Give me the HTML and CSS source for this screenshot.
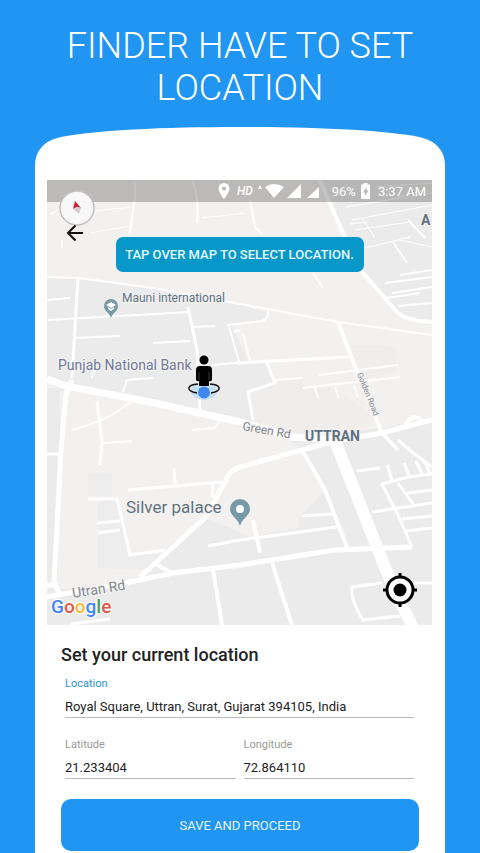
FILE: index.html
```html
<!DOCTYPE html>
<html lang="en">
<head>
<meta charset="utf-8">
<meta name="viewport" content="width=device-width, initial-scale=1">
<title>Set location</title>
<link rel="stylesheet" href="styles.css">
</head>
<body>
<h1 class="title">FINDER HAVE TO SET LOCATION</h1>
<main class="phone">
  <svg class="dome" viewBox="0 0 410 53" preserveAspectRatio="none" aria-hidden="true">
    <path d="M0 53V38C0 25 8 15 22 11C55 3 130 0 205 0S355 3 388 11C402 15 410 25 410 38V53Z" fill="#fff"/>
  </svg>
  <div class="screen">
    <section class="map">
      <svg class="map-canvas" viewBox="47 180 385 445" role="img" aria-label="Map of Uttran">
        <rect x="47" y="180" width="385" height="445" fill="#f3f1ef"/>
        <g fill="#ebebeb">
          <path d="M47 278L78 279L153 288L235 303L265 312V320L232 325L248 361L268 363L275 381V388L248 394L252 422L47 380Z"/>
          <path d="M318 180L343 233L363 273L398 313L432 321V180Z"/>
          <path d="M47 388H66L55 590L140 578L222 487L232 472L302 450L290 440L432 421V625H47Z"/>
        </g>
        <path d="M350 345L396 346V372L360 380ZM275 381L303 378V388L330 387L352 400L376 420L350 430L300 434L252 422L248 392L274 388Z" fill="#efeeed"/>
        <g fill="#f3f1ef">
          <path d="M67 390L98 405L120 498L132 555L158 555L140 578L58 588Z"/>
          <path d="M230 473L302 452L324 492L300 516L298 528L250 537L207 518Z"/>
          <path d="M60 392L150 405L240 424L292 440L232 470L207 516L160 553H132L118 500L60 500Z"/>
        </g>
        <path d="M88 474H112V496H88ZM98 502L118 500L130 555H162L146 570L98 568Z" fill="#eeeded"/>
        <g fill="none" stroke="#fff" stroke-linejoin="round">
          <g stroke-width="2">
            <path d="M47 277L78 278L153 288L235 303L338 322L432 335"/>
            <path d="M47 300L70 298M47 320L190 312M73 338L120 336M153 343L190 341M193 327L215 326"/>
            <path d="M72 430Q110 420 130 402M103 443L132 441M123 392L127 380L153 378M92 378L94 370M192 430L214 428L220 422"/>
            <path d="M227 325L262 321Q269 319 268 310M229 327L240 365M234 332L240 330M243 333L250 361M212 365L235 363"/>
            <path d="M318 375L398 365M303 388L400 377M315 388L318 398M335 387L339 398M354 385L358 397M275 380L303 378"/>
            <path d="M392 293L432 287M386 298L420 293M398 306L432 303M400 275L432 270M385 283L432 277"/>
            <path d="M393 242L407 263M408 220L425 238M313 273L323 288"/>
            <path d="M135 183V196L130 233M193 182Q199 198 197 223M250 200L255 227L262 234M62 240V248"/>
          </g>
          <path d="M345 207L432 193M352 220L432 205M355 230L410 222M362 218L375 238M350 224L368 222M365 248L410 237M400 240L432 247M388 200L425 190M375 187L432 183M50 215L78 196M76 213L130 207M90 233L130 226M202 218L245 213" stroke-width="1"/>
          <g stroke-width="3">
            <path d="M78 278L72 378M188 307L197 350L200 410M97 401L102 443L100 465"/>
            <path d="M235 363L348 357M267 363L275 383L248 392L253 420"/>
            <path d="M128 490L222 482M174 468L175 484M213 483L212 497M88 499H117L130 555L165 550M97 523L120 521M98 533L120 530M47 454H60"/>
            <path d="M208 546L240 540L337 527M302 516L332 514M357 471L380 468"/>
            <path d="M398 440L412 452L432 467M372 512L432 503M387 465L392 480M404 463L410 478M416 461L423 476M424 461L431 475"/>
            <path d="M432 474L408 477L382 484L398 515L412 547M398 483L413 504M407 493L432 490M402 519L432 516M406 531L432 528"/>
            <path d="M403 583H432M70 624L110 619M382 583L352 587Q350 600 363 620L400 616"/>
          </g>
          <g stroke-width="4">
            <path d="M320 180L343 233L363 273L398 313Q408 321 432 322"/>
            <path d="M338 322L360 380L382 433L398 450"/>
            <path d="M253 520L260 553M272 563L292 625M213 570L222 625M302 450L325 490L348 550"/>
            <path d="M154 563L172 573M405 425Q413 412 422 421"/>
          </g>
          <path d="M72 380L66 394L61 450L54 583L61 596M47 585H58" stroke-width="5"/>
          <path d="M47 597L140 580L173 573L240 565L335 550L412 547" stroke-width="5"/>
          <path d="M302 450L240 467Q230 470 226 480L222 487L207 516L140 577M302 450L335 441L382 433L432 420" stroke-width="5"/>
          <path d="M47 379L66 386L150 402L240 422L292 437L335 440" stroke-width="7"/>
          <path d="M335 441L388 575L415 632" stroke-width="12"/>
        </g>

        <g class="map-text">
          <text class="poi" x="122" y="302">Mauni international</text>
          <text class="bank" x="58" y="370">Punjab National Bank</text>
          <text class="place" x="126" y="513">Silver palace</text>
          <text class="area" x="305" y="441">UTTRAN</text>
          <text class="area" x="421" y="225">A</text>
          <text class="road" transform="translate(242 430) rotate(10)">Green Rd</text>
          <text class="road road-large" transform="translate(73 598) rotate(-9)">Utran Rd</text>
          <text class="road road-small" transform="translate(357 374) rotate(68)">Golden Road</text>
        </g>

        <path d="M111 299a7 7 0 0 1 7 7c0 5-5 6-7 12c-2-6-7-7-7-12a7 7 0 0 1 7-7Z" fill="#7899a7"/>
        <path d="M106 305l5-3 5 3-5 3ZM108 307v2l3 2 3-2v-2l-3 2Z" fill="#fff"/>
        <path d="M240 499a10 10 0 0 1 10 10c0 7-8 9-10 17c-2-8-10-10-10-17a10 10 0 0 1 10-10Z" fill="#7899a7"/>
        <circle cx="240" cy="509" r="4" fill="#fff"/>

        <ellipse cx="204" cy="391" rx="13" ry="9" fill="#bcdcf5" opacity=".8"/>
        <path d="M198 384C186 385 186 391 197 393M210 384C222 385 222 391 211 393" fill="none" stroke="#111" stroke-width="1.500"/>
        <circle cx="204" cy="360" r="4.500"/>
        <path d="M200 366h8q4 0 4 4v10q-1 2-3 1v5h-10v-5q-2 1-3-1v-10q0-4 4-4Z"/>
        <path d="M199 372v8M209 372v8" stroke="#777" stroke-width=".5"/>
        <circle cx="204" cy="392.500" r="6" fill="#3f86ee"/>

        <text class="google" x="51" y="613"><tspan fill="#4285f4">G</tspan><tspan fill="#e0564b">o</tspan><tspan fill="#f3bd2e">o</tspan><tspan fill="#4285f4">g</tspan><tspan fill="#43a45c">l</tspan><tspan fill="#e0564b">e</tspan></text>
      </svg>

      <div class="status">
        <svg class="status-pin" viewBox="0 0 12 16"><path d="M6 0a5.500 5.500 0 0 1 5.500 5.500C11.500 9.500 6 16 6 16S.5 9.500.5 5.500A5.500 5.500 0 0 1 6 0Zm0 3.500a2 2 0 1 0 0 4 2 2 0 0 0 0-4Z" fill="#fff" fill-rule="evenodd"/></svg>
        <span class="hd">HD</span>
        <svg class="status-signal" viewBox="0 0 64 16"><path d="M2 6L4 2 6 6ZM9 4Q18-2 28 4L18 15ZM45 1V15H31ZM63 4V15H51Z" fill="#fff"/></svg>
        <span class="battery-level">96%</span>
        <svg class="status-battery" viewBox="0 0 9 16"><path d="M2.500 1.500V0h4v1.500H9V16H0V1.500ZM5.500 4L2 9.500h2V13l3.500-5.500h-2Z" fill="#fff" fill-rule="evenodd"/></svg>
        <span>3:37 AM</span>
      </div>

      <button class="compass" type="button" aria-label="Reset north">
        <svg viewBox="0 0 38 38"><circle cx="19" cy="19" r="17" fill="#f8f8f8" stroke="#c4bec0" stroke-width="1.500"/><path d="M17 12L23 19L19 18L15 20Z" fill="#c92335"/><path d="M15 20L19 18L23 19L21 25Z" fill="#d9cbcf"/></svg>
      </button>
      <button class="back" type="button" aria-label="Back">
        <svg viewBox="0 0 18 18"><path d="M17 9H2M9.500 1.500L2 9L9.500 16.500" fill="none" stroke="#111" stroke-width="2"/></svg>
      </button>
      <div class="hint">TAP OVER MAP TO SELECT LOCATION.</div>
      <button class="locate" type="button" aria-label="My location">
        <svg viewBox="0 0 36 36"><circle cx="18" cy="18" r="13" fill="#fff" stroke="#000" stroke-width="3"/><circle cx="18" cy="18" r="6.500"/><path d="M18 1V6M18 30V35M1 18H6M30 18H35" stroke="#000" stroke-width="3"/></svg>
      </button>
    </section>

    <form class="form">
      <h2 class="form-title">Set your current location</h2>
      <div class="fields">
        <div class="field field-wide">
          <label class="label-active" for="location">Location</label>
          <input id="location" type="text" value="Royal Square, Uttran, Surat, Gujarat 394105, India">
        </div>
        <div class="field">
          <label for="latitude">Latitude</label>
          <input id="latitude" type="text" value="21.233404">
        </div>
        <div class="field">
          <label for="longitude">Longitude</label>
          <input id="longitude" type="text" value="72.864110">
        </div>
      </div>
      <button class="save" type="button">SAVE AND PROCEED</button>
    </form>
  </div>
</main>
</body>
</html>
```
FILE: styles.css
```css
* {
  box-sizing: border-box;
}

body {
  margin: 0;
  background: #2095f2;
  font-family: Roboto, sans-serif;
  color: #222;
}

svg {
  display: block;
}

button {
  padding: 0;
  border: 0;
  background: none;
  font-family: inherit;
}

.title {
  margin: 0;
  padding: 25px 48px 18px;
  color: #fff;
  font-size: 36px;
  font-weight: 300;
  line-height: 42px;
  text-align: center;
}

.phone {
  margin: 0 35px;
}

.dome {
  width: 100%;
  height: 53px;
}

.screen {
  padding: 0 13px 2px 12px;
  background: #fff;
}

.map {
  position: relative;
}

.map-canvas {
  width: 100%;
  height: auto;
}

.map-text {
  paint-order: stroke;
  stroke: #f3f3f3;
  stroke-width: 2px;
  fill: #62717e;
}

.poi {
  font-size: 12px;
}

.bank {
  font-size: 14px;
  fill: #747995;
}

.place {
  font-size: 17px;
}

.area {
  font-size: 14px;
  font-weight: 700;
}

.road {
  font-size: 12px;
  fill: #858a8e;
}

.road-large {
  font-size: 14px;
}

.road-small {
  font-size: 8px;
}

.google {
  font-size: 19px;
  font-weight: 500;
  stroke: #fff;
  stroke-width: 2px;
  paint-order: stroke;
}

.status {
  position: absolute;
  inset: 0 0 auto;
  display: flex;
  align-items: center;
  justify-content: flex-end;
  height: 22px;
  padding-right: 6px;
  background: rgba(90, 90, 90, 0.36);
  color: #fff;
  font-size: 13px;
}

.status-pin {
  width: 12px;
  height: 16px;
  margin-right: 7px;
}

.hd {
  font-size: 12px;
  font-style: italic;
  font-weight: 500;
}

.status-signal {
  width: 64px;
  height: 16px;
  margin: 0 12px 0 3px;
}

.battery-level {
  margin-right: 5px;
}

.status-battery {
  width: 9px;
  height: 16px;
  margin-right: 8px;
}

.compass {
  position: absolute;
  top: 9px;
  left: 11px;
  width: 38px;
}

.back {
  position: absolute;
  top: 44px;
  left: 19px;
  width: 18px;
}

.hint {
  position: absolute;
  top: 57px;
  left: 50%;
  width: 248px;
  margin-left: -124px;
  border-radius: 7px;
  background: #0797c9;
  color: #e6f8ff;
  font-size: 13px;
  font-weight: 500;
  line-height: 35px;
  text-align: center;
  white-space: nowrap;
}

.locate {
  position: absolute;
  right: 14px;
  bottom: 17px;
  width: 36px;
}

.form {
  padding: 18px 13px 0 14px;
}

.form-title {
  margin: 0;
  font-size: 18px;
  font-weight: 500;
  line-height: 24px;
}

.fields {
  display: grid;
  grid-template-columns: 1fr 1fr;
  gap: 19px 8px;
  padding: 9px 5px 20px 4px;
}

.field {
  display: flex;
  flex-direction: column;
}

.field-wide {
  grid-column: 1 / -1;
}

.field label {
  color: #999;
  font-size: 11px;
  line-height: 16px;
}

.field .label-active {
  color: #2b8fce;
}

.field input {
  width: 100%;
  height: 26px;
  padding: 4px 0 0;
  border: 0;
  border-bottom: 1px solid #bbb;
  border-radius: 0;
  background: none;
  color: #222;
  font-family: inherit;
  font-size: 13px;
}

.save {
  width: 100%;
  height: 52px;
  border-radius: 10px;
  background: #2095f2;
  color: #e6f8ff;
  font-size: 13px;
}
```
